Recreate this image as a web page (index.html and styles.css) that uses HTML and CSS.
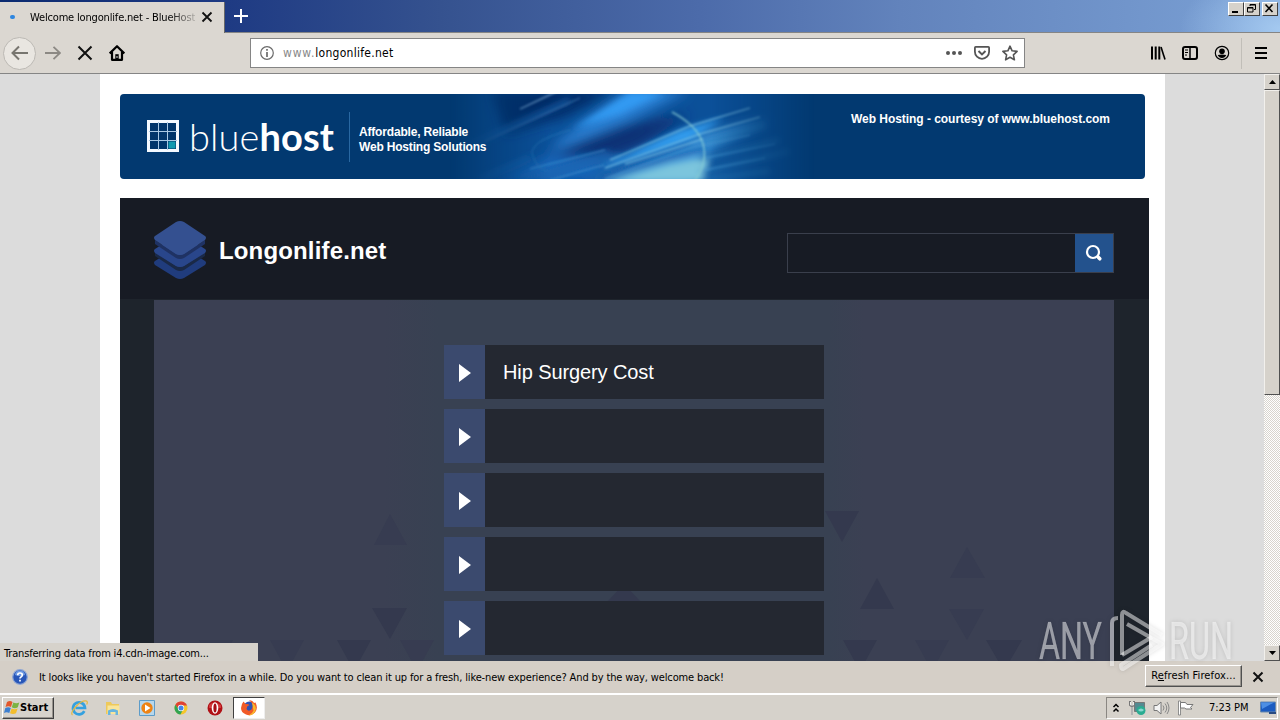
FILE: index.html
```html
<!DOCTYPE html>
<html lang="en">
<head>
<meta charset="utf-8">
<title>Welcome longonlife.net - BlueHost.com</title>
<link rel="stylesheet" href="styles.css">
</head>
<body>
<div class="screen">
  <header class="tabbar">
    <div class="tab">
      <span class="loading-dot"></span>
      <span class="tab-title">Welcome longonlife.net - BlueHost</span>
      <svg class="tab-close" width="12" height="12" viewBox="0 0 12 12"><path d="M1.5 1.5l9 9M10.5 1.5l-9 9" stroke="#111" stroke-width="1.8"/></svg>
    </div>
    <svg class="new-tab" width="14" height="14" viewBox="0 0 14 14"><path d="M7 0v14M0 7h14" stroke="#fff" stroke-width="2"/></svg>
    <div class="window-buttons">
      <span class="winbtn"><svg width="13" height="11"><path d="M3 9h6" stroke="#000" stroke-width="2"/></svg></span>
      <span class="winbtn"><svg width="13" height="11"><path d="M5 3V1.500h5.500v5H9M5 2h5.500M2.500 4.500h5.500v4.500H2.500zM2.500 5h5.500" fill="none" stroke="#000"/></svg></span>
      <span class="winbtn last"><svg width="13" height="11"><path d="M2.500 1.500l7 7.500M9.500 1.500l-7 7.500" stroke="#000" stroke-width="1.600"/></svg></span>
    </div>
  </header>

  <nav class="toolbar">
    <span class="back"><svg width="18" height="16" viewBox="0 0 18 16"><path d="M17 8H2M8 1.500L1.500 8 8 14.500" fill="none" stroke="#77756f" stroke-width="2"/></svg></span>
    <svg class="forward" width="16" height="16" viewBox="0 0 16 16"><path d="M0 8h14M8.500 1.800L15 8l-6.500 6.200" fill="none" stroke="#8c8984" stroke-width="1.800"/></svg>
    <svg class="stop" width="16" height="16" viewBox="0 0 16 16"><path d="M1.500 1.500l13 13M14.500 1.500l-13 13" stroke="#111" stroke-width="2"/></svg>
    <svg class="home" width="16" height="16" viewBox="0 0 16 16"><path d="M.7 8.400L8 1.200l7.300 7.200M3 7v7.800h10V7" fill="none" stroke="#000" stroke-width="2.200" stroke-linejoin="round"/><path d="M6.300 14V9.200h3.400V14z" fill="#000"/><path d="M7.500 11h1v2h-1z" fill="#ddd"/></svg>
    <div class="urlbar">
      <svg width="14" height="14" viewBox="0 0 14 14"><circle cx="7" cy="7" r="6.300" fill="none" stroke="#6b6b6b" stroke-width="1.200"/><path d="M7 3v1.800M7 6v5" stroke="#6b6b6b" stroke-width="1.700"/></svg>
      <span class="url"><span class="sub">www.</span>longonlife.net</span>
      <svg class="dots" width="18" height="16" viewBox="0 0 18 16"><g fill="#555"><circle cx="3" cy="8" r="2"/><circle cx="9" cy="8" r="2"/><circle cx="15" cy="8" r="2"/></g></svg>
      <svg width="16" height="16" viewBox="0 0 16 16"><path d="M1.700 1.900h12.600q.8 0 .8.800v4a7.100 7.100 0 0 1-14.200 0v-4q0-.8.800-.800z" fill="none" stroke="#555" stroke-width="1.800"/><path d="M4.500 6L8 9.400 11.500 6" fill="none" stroke="#555" stroke-width="2"/></svg>
      <svg class="star" width="16" height="16" viewBox="0 0 16 16"><path d="M8 1.200l2.100 4.600 5 .6-3.700 3.400 1 5L8 12.300l-4.400 2.500 1-5L.900 6.400l5-.6z" fill="none" stroke="#555" stroke-width="1.600" stroke-linejoin="round"/></svg>
    </div>
    <div class="tools">
      <svg width="16" height="16" viewBox="0 0 16 16"><path d="M2 1.500v13M5.700 1.500v13M9.300 1.500v13" stroke="#000" stroke-width="2"/><path d="M11 2l4 12.500" stroke="#000" stroke-width="1.600"/></svg>
      <svg width="16" height="16" viewBox="0 0 16 16"><rect x="1" y="2" width="14" height="12" rx="2" fill="none" stroke="#000" stroke-width="2"/><path d="M8 2v12" stroke="#000" stroke-width="1.500"/><path d="M3 5h3M3 7.500h3M3 10h2" stroke="#000"/></svg>
      <svg width="16" height="16" viewBox="0 0 16 16"><circle cx="8" cy="8" r="6.700" fill="none" stroke="#000" stroke-width="1.200"/><circle cx="8" cy="6.200" r="2.800" fill="#000"/><path d="M3.700 10q4.300-1.200 8.600 0-1.300 3-4.300 3t-4.300-3z" fill="#000"/></svg>
    </div>
    <span class="divider"></span>
    <svg class="menu" width="12" height="14" viewBox="0 0 12 14"><path d="M0 2h12M0 7h12M0 12h12" stroke="#000" stroke-width="2"/></svg>
  </nav>

  <main class="viewport">
    <div class="page">
      <section class="banner">
        <svg class="streaks" width="400" height="85" viewBox="450 94 400 85">
          <defs>
            <linearGradient id="fade"><stop offset="0" stop-color="#fff" stop-opacity="0"/><stop offset=".25" stop-color="#fff"/><stop offset=".65" stop-color="#fff"/><stop offset=".91" stop-color="#fff" stop-opacity="0"/></linearGradient>
            <mask id="m"><rect x="450" y="94" width="400" height="85" fill="url(#fade)"/></mask>
            <filter id="b6" x="-30%" y="-60%" width="160%" height="220%"><feGaussianBlur stdDeviation="6"/></filter>
            <filter id="b3" x="-30%" y="-60%" width="160%" height="220%"><feGaussianBlur stdDeviation="3"/></filter>
            <filter id="b1" x="-30%" y="-60%" width="160%" height="220%"><feGaussianBlur stdDeviation=".9"/></filter>
          </defs>
          <g mask="url(#m)">
            <rect x="450" y="94" width="400" height="85" fill="#0b5099"/>
            <g filter="url(#b6)">
              <path d="M490 90h125l-50 26-60 18z" fill="#052a66"/>
              <path d="M540 158l60-30 90-14-50 32-40 14z" fill="#0a3276"/>
              <path d="M560 140l70-50h60l-65 33-75 30z" fill="#2a80d4"/>
              <path d="M590 182l120-50 60-12-60 30-20 32z" fill="#3c94da"/>
              <path d="M490 182l60-28 60 5-20 22z" fill="#1765b8"/>
            </g>
            <g filter="url(#b3)">
              <path d="M572 129l58-37h36l-46 22z" fill="#309af2"/>
              <path d="M600 167l80-37 45-12-35 22-70 25z" fill="#309cee"/>
              <path d="M605 182l65-18 40-8-7 26z" fill="#7cc5dd"/>
              <path d="M470 145l100-45M480 179l50-21M520 180l90-28M540 180l80-25" stroke="#1d66b2" stroke-width="4"/>
              <path d="M610 167l80-25M600 178l105-30" stroke="#0a4d9c" stroke-width="3"/>
              <path d="M700 172l90-21M700 160l80-20M700 180l70-9M705 143l60-18" stroke="#2a80bd" stroke-width="3"/>
            </g>
            <g fill="none" filter="url(#b1)">
              <path d="M520 109l42-20" stroke="#6f9cc8" stroke-width="1.600" opacity=".8"/>
              <path d="M485 141l95-43" stroke="#3c74b0" stroke-width="2" opacity=".5"/>
              <path d="M610 160l80-34 60-18M605 168l95-34 60-17M625 164l78-25" stroke="#8ed2ee" stroke-width="1.800" opacity=".6"/>
              <path d="M530 169l75-19M550 180l54-15M605 179l85-31 60-13M705 158l70-14M705 170l60-12" stroke="#4596d2" stroke-width="1.500" opacity=".6"/>
              <path d="M672 112q26 14 31 32t-8 36" stroke="#86ccd5" stroke-width="1.600" opacity=".8"/>
              <path d="M570 130q-44 12-37 27t14 13" stroke="#2a74b5" stroke-width="1.500" opacity=".6"/>
            </g>
          </g>
        </svg>
        <svg class="brand-icon" width="34" height="34" viewBox="0 0 34 34"><path d="M1 1h31v31H1z" fill="#00356b"/><path d="M22.500 22.500h7v7h-7z" fill="#0f99b0"/><path d="M2.500 2.500h29v29h-29z" fill="none" stroke="#f4f9ff" stroke-width="3"/><path d="M12.500 3v28M21.500 3v28M3 12.500h28M3 21.500h28" stroke="#a9c9e5" stroke-width="1"/></svg>
        <div class="brand"><span class="thin">blue</span><b>host</b></div>
        <div class="tagline">Affordable, Reliable<br>Web Hosting Solutions</div>
        <div class="courtesy">Web Hosting - courtesy of www.bluehost.com</div>
      </section>

      <section class="site">
        <div class="site-head">
          <svg width="54" height="60" viewBox="0 0 54 60">
            <path d="M2 41L27 25l25 16q2 1.500 0 4L31 58q-4 2-8 0L2 45q-2-2.500 0-4z" fill="#203c7d"/>
            <path d="M2 32l21 14q4 2 8 0l21-14v4L31 50q-4 2-8 0L2 36z" fill="#1a2947"/>
            <path d="M2 29L27 13l25 16q2 1.500 0 4L31 46q-4 2-8 0L2 33q-2-2.500 0-4z" fill="#29468b"/>
            <path d="M2 20l21 14q4 2 8 0l21-14v4L31 38q-4 2-8 0L2 24z" fill="#1f3263"/>
            <path d="M2 16L23 2q4-2 8 0l21 14q2 1.500 0 4L31 34q-4 2-8 0L2 20q-2-2.500 0-4z" fill="#345090"/>
          </svg>
          <h1>Longonlife.net</h1>
          <div class="search"><span class="search-btn"><svg width="18" height="18" viewBox="0 0 18 18"><circle cx="8" cy="8" r="6" fill="none" stroke="#fff" stroke-width="2.200"/><path d="M13.500 13.500l1.300 1.300" stroke="#fff" stroke-width="3.600" stroke-linecap="round"/></svg></span></div>
        </div>
        <div class="panel">
          <svg class="triangles" width="960" height="361" viewBox="154 300 960 361">
            <g fill="#34394e">
              <path d="M825 511h34l-17 31zM860 609l17-31 17 31z"/>
              <path d="M606 603l18-19 18 19z"/>
              <path d="M372 608h35l-17 31zM337 640h34l-17 31zM843 640h34l-17 31zM986 640h36l-18 31z"/>
            </g>
            <g fill="#373c51">
              <path d="M950 578l17-31 18 31zM374 545l16-31 17 31zM949 609h35l-17 31zM915 640h34l-17 31zM270 640h34l-17 31zM199 640h34l-17 31zM400 640h34l-17 31z"/>
            </g>
          </svg>
          <ul class="links">
            <li><span class="arrow"></span><span class="label">Hip Surgery Cost</span></li>
            <li><span class="arrow"></span><span class="label"></span></li>
            <li><span class="arrow"></span><span class="label"></span></li>
            <li><span class="arrow"></span><span class="label"></span></li>
            <li><span class="arrow"></span><span class="label"></span></li>
          </ul>
        </div>
      </section>
    </div>
    <div class="scrollbar">
      <span class="sb-btn"><svg width="7" height="4"><path d="M0 4l3.500-4L7 4z"/></svg></span>
      <span class="thumb"></span>
      <span class="sb-btn down"><svg width="7" height="4"><path d="M0 0h7L3.500 4z"/></svg></span>
    </div>
    <div class="status">Transferring data from i4.cdn-image.com...</div>
  </main>

  <div class="notice">
    <svg width="16" height="16" viewBox="0 0 16 16"><circle cx="8" cy="8" r="7.300" fill="#2856b8" stroke="#8ea6d4" stroke-width="1.200"/><path d="M3 6a5 4.500 0 0 1 10 0q-5 2-10 0z" fill="#6f9be4"/><path d="M5.700 6.200q0-2.200 2.300-2.200t2.300 2q0 1.300-1.300 1.900Q8 8.400 8 9.500M8 10.800v1.700" fill="none" stroke="#fff" stroke-width="1.700"/></svg>
    <span class="notice-text">It looks like you haven't started Firefox in a while. Do you want to clean it up for a fresh, like-new experience? And by the way, welcome back!</span>
    <span class="refresh">R<u>e</u>fresh Firefox...</span>
    <svg class="notice-close" width="12" height="12" viewBox="0 0 12 12"><path d="M1.500 1.500l9 9M10.500 1.500l-9 9" stroke="#111" stroke-width="2"/></svg>
  </div>

  <footer class="taskbar">
    <div class="start">
      <svg width="16" height="15" viewBox="0 0 16 15"><path d="M3 2q3-2 5.500 0L7 7Q4.500 5.500 1.500 7z" fill="#e2572b"/><path d="M9.300 2.400q3 1.500 6 0L13.800 7.300q-3 1.700-6 0z" fill="#7cb342"/><path d="M1.300 8q3-1.600 5.500 0l-1.500 5Q2.600 11.500 0 13z" fill="#3d7fd0"/><path d="M7.600 8.500q3 1.500 6 0L12 13.300q-3 1.500-6 0z" fill="#f3bd2c"/></svg>
      <span>Start</span>
    </div>
    <div class="quick">
      <svg width="18" height="18" viewBox="0 0 18 18"><path d="M14.300 12.200A6 6 0 1 1 15 9H5.500" fill="none" stroke="#35a1df" stroke-width="2.700"/><path d="M2.500 16Q0 14 6 7.500T16.500 2q1.500 1 .2 3.600" fill="none" stroke="#e3b840" stroke-width="1.200"/></svg>
      <svg width="18" height="18" viewBox="0 0 18 18"><path d="M2 3h5l1 2h7v10H2z" fill="#eec95a"/><path d="M3.500 6.500h12V15h-12z" fill="#f9e59b"/><path d="M4 16v-4.500q5-3 10 0V16h-2.500v-3h-5v3z" fill="#68b5de"/></svg>
      <svg width="18" height="18" viewBox="0 0 18 18"><path d="M1.500 1.500h15v15h-15z" fill="#b7d7ec" stroke="#5d9cc9"/><circle cx="9" cy="9" r="5.700" fill="#ee8314"/><path d="M7 5.500v7L12.500 9z" fill="#fff"/></svg>
      <svg width="18" height="18" viewBox="0 0 18 18"><circle cx="9" cy="9" r="6.500" fill="#f4c62b"/><path d="M3.400 5.700A6.500 6.500 0 0 1 15 6.500H9l-2.500 3.500z" fill="#df4234"/><path d="M3.400 5.700a6.500 6.500 0 0 0 5 9.800l3-5.500H6.500z" fill="#31a452"/><circle cx="9" cy="9" r="3.200" fill="#fff"/><circle cx="9" cy="9" r="2.500" fill="#4385e8"/></svg>
      <svg width="18" height="18" viewBox="0 0 18 18"><circle cx="9" cy="9" r="7.500" fill="#b01015"/><path d="M3 6q5-5 12 0v3H3z" fill="#d33a3b"/><ellipse cx="9" cy="9" rx="3.300" ry="5.700" fill="#fff"/><ellipse cx="9" cy="9" rx="1.600" ry="4.500" fill="#a70e15"/></svg>
      <span class="active-task"><svg width="18" height="18" viewBox="0 0 18 18"><circle cx="9.500" cy="9" r="6.500" fill="#3152b4"/><path d="M2 5l1.500-2.500L5.500 5q2.500-.5 4 1L7.200 7.500 6.500 10q2 3 5 .5l1.500-4q-1-3-4-5.500 4 .5 5 3l1.500-.5q3 6-.5 10-4 4-9 2T1 9z" fill="#f15a28"/><path d="M12 3.500q5 3 3.500 8-2 5-7 5 4-2 5-5z" fill="#f9b72b"/></svg></span>
    </div>
    <div class="tray">
      <svg width="8" height="12" viewBox="0 0 8 12"><path d="M1.500 5L4 2.500 6.500 5M1.500 9.500L4 7l2.500 2.500" fill="none" stroke="#000" stroke-width="1.500"/></svg>
      <svg class="net" width="17" height="16" viewBox="0 0 17 16"><path d="M5.500 2.500h10v9h-10z" fill="#548a91" stroke="#777"/><path d="M1 1v4q2 2 4 0V1M3 6v9" fill="none" stroke="#777" stroke-width="2"/><path d="M3 7v8M1.500 2v3h3V2" stroke="#eee" fill="none"/><circle cx="12" cy="10.500" r="4.500" fill="#2bac91"/><path d="M9 10q3-3 6 0-3 3-6 0" fill="#8cd6d0"/></svg>
      <svg class="vol" width="17" height="16" viewBox="0 0 17 16"><path d="M1 5.500h3L8 2v12l-4-3.500H1z" fill="#f3f3f3" stroke="#777"/><path d="M10 5.500q2 2.500 0 5M12 3.500q3.500 4.500 0 9M14 2q4 6 0 12" fill="none" stroke="#888"/></svg>
      <svg class="flag" width="17" height="16" viewBox="0 0 17 16"><path d="M1.500 1h2v14h-2z" fill="#fff" stroke="#777" stroke-width=".8"/><path d="M3.500 2.500h5l1.500 2h6l-2.500 3L15 9h-6L7.500 8h-4z" fill="#fff" stroke="#777"/></svg>
      <span class="clock">7:23 PM</span>
      <svg class="desk" width="16" height="14" viewBox="0 0 16 14"><path d="M.5 1h15v10H.5z" fill="#1b5bc0" stroke="#6888ad"/><path d="M1 1.500h13L2 8z" fill="#4d8fe4"/><path d="M9 12h7" stroke="#284a80" stroke-width="2"/></svg>
    </div>
  </footer>

  <svg class="watermark" width="210" height="70" viewBox="1030 605 210 70">
    <g class="wm-text">
      <text x="1039" y="659" textLength="63" lengthAdjust="spacingAndGlyphs">ANY</text>
      <text x="1169" y="659" textLength="64" lengthAdjust="spacingAndGlyphs">RUN</text>
    </g>
    <g fill="none" stroke="#fff" stroke-opacity=".5" stroke-width="4" stroke-linejoin="round">
      <path d="M1118 618q-6 0-6 5v43"/>
      <path d="M1127 624l35 20-39 25q-2 0-2-4l31-20"/>
      <path d="M1122 655v-40q0-5 4-2l36 22"/>
      <path d="M1122 655l30-18"/>
    </g>
  </svg>
</div>
</body>
</html>
```
FILE: styles.css
```css
* { box-sizing: border-box; }
body { margin: 0; }
svg { display: block; flex: none; }
.screen {
  position: relative;
  display: flex;
  flex-direction: column;
  width: 1280px;
  height: 720px;
  overflow: hidden;
  background: #d6d2cb;
  font-family: "DejaVu Sans Condensed", "DejaVu Sans", sans-serif;
  font-stretch: condensed;
  font-size: 11px;
  color: #000;
}

.tabbar {
  display: flex;
  flex: none;
  height: 33px;
  border-bottom: 1px solid #858585;
  background: radial-gradient(ellipse 100px 60px at 100% 90%, #a4c9f0, rgba(164, 201, 240, 0)), linear-gradient(90deg, #0b2a70 0, #1e3a83 225px, #35528f 440px, #4c6baa 700px, #6283bc 900px, #7ba1d5 1280px);
}
.tab {
  display: flex;
  align-items: center;
  width: 225px;
  height: 31px;
  margin-top: 2px;
  padding-left: 10px;
  background: #dbd7d1;
  border-right: 1px solid #686868;
}
.loading-dot { width: 5px; height: 4px; margin-top: -2px; border-radius: 2px; background: #2e86e0; }
.tab-title {
  width: 165px;
  margin: -1px 0 0 15px;
  overflow: hidden;
  white-space: nowrap;
  letter-spacing: -0.17px;
  background: linear-gradient(90deg, #000 138px, rgba(0, 0, 0, .2) 165px);
  background-clip: text;
  color: transparent;
}
.tab-close { margin: -2px 0 0 6px; }
.new-tab { margin: 9px 0 0 9px; }
.window-buttons { display: flex; margin: 2px 2px 0 auto; }
.winbtn {
  width: 16px;
  height: 14px;
  background: #d6d2cb;
  border: 1px solid;
  border-color: #fff #404040 #404040 #fff;
}
.winbtn.last { margin-left: 2px; }

.toolbar {
  display: flex;
  align-items: center;
  flex: none;
  height: 41px;
  padding-left: 3px;
  background: #dbd7d1;
  border-bottom: 1px solid #858585;
}
.back {
  display: flex;
  align-items: center;
  justify-content: center;
  width: 33px;
  height: 33px;
  border: 1px solid #bcb9b4;
  border-radius: 50%;
  background: #e9e6e1;
}
.forward { margin-left: 9px; }
.stop { margin-left: 16px; }
.home { margin-left: 16px; }
.urlbar {
  display: flex;
  align-items: center;
  width: 775px;
  height: 30px;
  margin-left: 125px;
  padding: 0 6px 0 9px;
  background: #fff;
  border: 1px solid #858585;
}
.url { margin-left: 9px; font-size: 12px; letter-spacing: 0.28px; }
.url .sub { color: #888; letter-spacing: 0.85px; }
.dots { margin: 0 11px 0 auto; }
.star { margin-left: 12px; }
.tools { display: flex; gap: 16px; margin-left: 125px; }
.divider { width: 1px; height: 31px; margin-left: 11px; background: #c1beb8; }
.menu { margin-left: 13px; }

.viewport {
  position: relative;
  display: flex;
  flex: none;
  height: 587px;
  overflow: hidden;
  background: #dcdcdc;
}
.page {
  width: 1065px;
  height: 587px;
  margin-left: 100px;
  padding: 20px 16px 0 20px;
  background: #fff;
}
.banner {
  position: relative;
  display: flex;
  width: 1025px;
  height: 85px;
  border-radius: 4px;
  overflow: hidden;
  background: #023970;
  color: #fff;
  font-family: "Liberation Sans", Arial, sans-serif;
  font-stretch: normal;
}
.streaks { position: absolute; left: 330px; top: 0; }
.brand-icon { margin: 25px 0 0 26px; }
.brand {
  width: 150px;
  margin: 20px 0 0 9px;
  font: 300 38px/44px Lato, sans-serif;
  letter-spacing: 0.1px;
  white-space: nowrap;
}
.brand b { font-weight: 700; }
.tagline {
  position: relative;
  height: 50px;
  margin: 18px 0 0 10px;
  padding: 13px 0 0 9px;
  border-left: 1px solid #2968a2;
  font: bold 12px/15px "Liberation Sans", Arial, sans-serif;
  letter-spacing: -0.18px;
}
.courtesy {
  margin: 18px 35px 0 auto;
  font: bold 12px/14px "Liberation Sans", Arial, sans-serif;
  letter-spacing: -0.04px;
}

.site {
  width: 1029px;
  height: 463px;
  margin-top: 19px;
  background: #1e242c;
}
.site-head {
  display: flex;
  align-items: center;
  height: 101px;
  padding: 2px 35px 0 33px;
  background: #171b24;
}
.site-head h1 {
  margin: 2px 0 0 12px;
  color: #fff;
  font: bold 24px/30px "Liberation Sans", Arial, sans-serif;
  letter-spacing: .15px;
}
.search {
  display: flex;
  justify-content: flex-end;
  width: 327px;
  height: 40px;
  margin: 7px 0 0 auto;
  border: 1px solid #3a3f4c;
}
.search-btn {
  display: flex;
  align-items: center;
  justify-content: center;
  width: 38px;
  height: 38px;
  background: #23528d;
}
.panel {
  position: relative;
  width: 960px;
  height: 361px;
  margin: 1px 0 0 34px;
  padding: 45px 0 0 290px;
  overflow: hidden;
  background: linear-gradient(90deg, #3b4053 0, #3b4053 230px, #384152 285px, #384152 675px, #3b4053 710px);
}
.triangles { position: absolute; left: 0; top: 0; }
.links {
  position: relative;
  display: flex;
  flex-direction: column;
  gap: 10px;
  width: 380px;
  margin: 0;
  padding: 0;
  list-style: none;
}
.links li { display: flex; height: 54px; background: #242831; }
.arrow {
  display: flex;
  align-items: center;
  width: 41px;
  padding: 1px 0 0 15px;
  background: #3b4a6e;
}
.arrow::before {
  content: "";
  border: solid transparent;
  border-width: 9.5px 0 9.5px 12px;
  border-left-color: #fff;
}
.label {
  padding-left: 18px;
  color: #fff;
  font: 20px/54px "Liberation Sans", Arial, sans-serif;
  letter-spacing: -0.1px;
}
.scrollbar {
  display: flex;
  flex-direction: column;
  width: 16px;
  margin-left: auto;
  background: repeating-conic-gradient(#fff 0 25%, #d8d4cd 0 50%) 0 0 / 2px 2px;
}
.sb-btn, .thumb {
  background: #d6d2cb;
  border: 1px solid;
  border-color: #f2f0ec #505050 #505050 #f2f0ec;
}
.sb-btn { display: flex; align-items: center; justify-content: center; height: 16px; }
.sb-btn.down { margin-top: auto; }
.thumb { height: 305px; }
.status {
  position: absolute;
  left: 0;
  bottom: 0;
  width: 258px;
  height: 18px;
  padding-left: 4px;
  line-height: 21px;
  letter-spacing: -0.17px;
  background: #d6d2cb;
  white-space: nowrap;
}

.notice {
  display: flex;
  align-items: center;
  flex: none;
  height: 32px;
  padding-left: 12px;
  background: #d5cfc7;
}
.notice-text { margin-left: 11px; white-space: nowrap; letter-spacing: -0.14px; }
.refresh {
  width: 97px;
  height: 22px;
  margin: 0 10px 2px auto;
  border: 1px solid;
  border-color: #fff #505050 #505050 #fff;
  box-shadow: inset -1px -1px #99958f;
  line-height: 20px;
  letter-spacing: 0.1px;
  text-align: center;
  white-space: nowrap;
}
.notice-close { margin-right: 16px; }

.taskbar {
  display: flex;
  align-items: center;
  flex: none;
  height: 27px;
  border-top: 2px solid #fff;
  background: #d6d2cb;
}
.start {
  display: flex;
  align-items: center;
  gap: 0;
  width: 52px;
  height: 22px;
  margin-left: 2px;
  padding-left: 1px;
  border: 1px solid;
  border-color: #fff #404040 #404040 #fff;
  box-shadow: inset -1px -1px #98948e;
  font-weight: bold;
  letter-spacing: 0;
}
.quick { display: flex; align-items: center; gap: 16px; margin-left: 16px; }
.active-task {
  display: flex;
  align-items: center;
  justify-content: center;
  width: 32px;
  height: 22px;
  margin-left: -7px;
  background: #fff;
  border: 1px solid;
  border-color: #404040 #eee #eee #404040;
}
.tray {
  display: flex;
  align-items: center;
  width: 172px;
  height: 22px;
  margin: 0 2px 0 auto;
  padding-left: 5px;
  border: 1px solid;
  border-color: #8a8782 #fff #fff #8a8782;
}
.net { margin-left: 9px; }
.vol { margin-left: 7px; }
.flag { margin-left: 7px; }
.clock { width: 40px; margin-left: 15px; white-space: nowrap; letter-spacing: -0.05px; }
.desk { margin-left: 11px; }
.watermark {
  position: absolute;
  left: 1030px;
  top: 605px;
  overflow: visible;
  filter: drop-shadow(0 0 2px rgba(0, 0, 0, .25));
}
.wm-text {
  font: 51px Roboto, sans-serif;
  fill: #fff;
  fill-opacity: .5;
  stroke: #fff;
  stroke-opacity: .15;
  stroke-width: .6px;
}
```
